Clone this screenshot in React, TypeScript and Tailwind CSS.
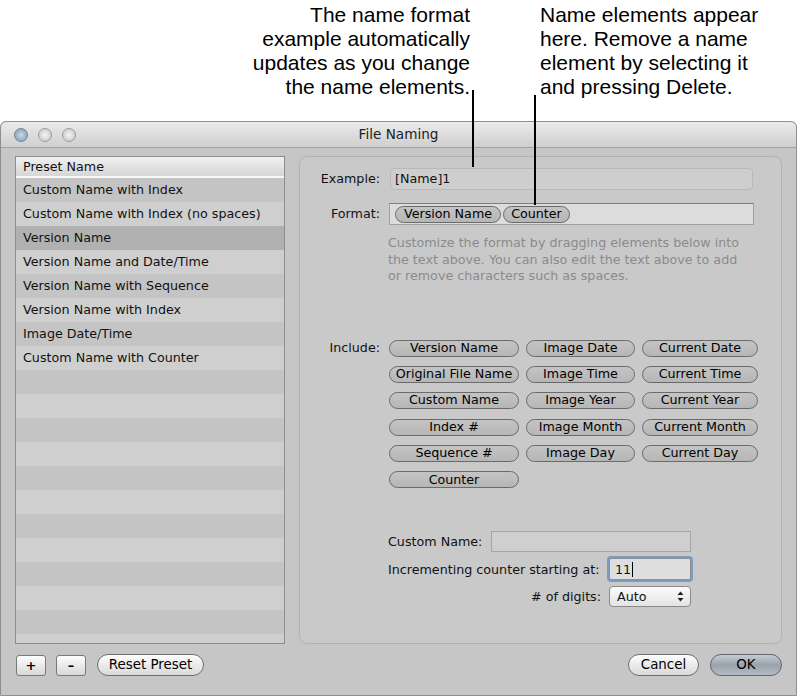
import React from 'react';

const presets = [
  'Custom Name with Index',
  'Custom Name with Index (no spaces)',
  'Version Name',
  'Version Name and Date/Time',
  'Version Name with Sequence',
  'Version Name with Index',
  'Image Date/Time',
  'Custom Name with Counter',
];

const includeCols = [
  ['Version Name', 'Original File Name', 'Custom Name', 'Index #', 'Sequence #', 'Counter'],
  ['Image Date', 'Image Time', 'Image Year', 'Image Month', 'Image Day'],
  ['Current Date', 'Current Time', 'Current Year', 'Current Month', 'Current Day'],
];

const colWidths = ['w-[130px]', 'w-[109px]', 'w-[116px]'];

function Pill({ label, className }: { label: string; className?: string }) {
  return (
    <div
      className={`h-[17px] flex items-center justify-center rounded-full border border-[#6a6a6a] bg-linear-to-b from-[#c4c4c4] to-[#b6b6b6] text-[12.7px] leading-none text-black whitespace-nowrap ${className ?? ''}`}
    >
      {label}
    </div>
  );
}

function TrafficLight({ active }: { active?: boolean }) {
  return (
    <div
      className={`w-[14px] h-[14px] rounded-full border ${
        active
          ? 'border-[#6f8498] bg-radial from-[#c9d8e6] to-[#7f98b0]'
          : 'border-[#9a9a9a] bg-radial from-[#f4f4f4] to-[#c2c2c2]'
      }`}
    />
  );
}

export default function App() {
  return (
    <div className="relative w-[798px] h-[698px] bg-white overflow-hidden font-['DejaVu_Sans',sans-serif]">
      {/* Callout text */}
      <div className="h-[121px] flex font-['Liberation_Sans',Arial,sans-serif] text-[21px] leading-[24px] text-black pt-[3px]">
        <div className="w-[470px] text-right">
          The name format
          <br />
          example automatically
          <br />
          updates as you change
          <br />
          the name elements.
        </div>
        <div className="ml-[70px]">
          Name elements appear
          <br />
          here. Remove a name
          <br />
          element by selecting it
          <br />
          and pressing Delete.
        </div>
      </div>

      {/* Leader lines */}
      <div className="absolute left-[472px] top-[90px] w-[2px] h-[77px] bg-black z-10" />
      <div className="absolute left-[534px] top-[95px] w-[2px] h-[110px] bg-black z-10" />

      {/* Window */}
      <div className="w-[797px] h-[575px] rounded-t-[6px] border border-[#8e8e8e] bg-[#c6c6c6] flex flex-col">
        {/* Title bar */}
        <div className="h-[26px] shrink-0 rounded-t-[6px] bg-linear-to-b from-[#ebebeb] to-[#cfcfcf] border-b border-[#a3a3a3] flex items-center relative">
          <div className="flex gap-[10px] pl-[13px]">
            <TrafficLight active />
            <TrafficLight />
            <TrafficLight />
          </div>
          <div className="absolute inset-0 flex items-center justify-center text-[13.6px] text-[#222]">File Naming</div>
        </div>

        {/* Body */}
        <div className="flex gap-[14px] pl-[14px] pt-[8px] text-[12.7px]">
          {/* Preset list */}
          <div className="w-[270px] h-[488px] border border-[#8c8c8c] bg-[#cfcfcf] flex flex-col overflow-hidden">
            <div className="h-[21px] shrink-0 bg-linear-to-b from-[#f1f1f1] to-[#d6d6d6] border-b-2 border-[#f7f7f7] flex items-center pl-[7px] text-[#111]">
              Preset Name
            </div>
            {Array.from({ length: 20 }).map((_, i) => {
              const selected = i === 2;
              const bg = selected ? 'bg-[#b1b1b1]' : i % 2 === 0 ? 'bg-[#c4c4c4]' : 'bg-[#cfcfcf]';
              return (
                <div key={i} className={`h-[24px] shrink-0 flex items-center pl-[7px] pb-[1px] text-[#111] ${bg}`}>
                  {presets[i] ?? ''}
                </div>
              );
            })}
          </div>

          {/* Settings panel */}
          <div className="w-[483px] h-[488px] rounded-[8px] border border-[#b2b2b2] bg-[#c9c9c9] flex flex-col text-[#111]">
            <div className="flex items-center mt-[11px]">
              <div className="w-[80px] text-right">Example:</div>
              <div className="ml-[10px] w-[363px] h-[22px] rounded-[4px] border border-[#b9b9b9] bg-[#cecece] flex items-center pl-[4px]">
                [Name]1
              </div>
            </div>

            <div className="flex items-center mt-[13px]">
              <div className="w-[80px] text-right">Format:</div>
              <div className="ml-[9px] w-[365px] h-[22px] border border-[#a0a0a0] border-t-[#7d7d7d] bg-[#dcdcdc] flex items-center gap-[2px] pl-[5px]">
                <Pill label="Version Name" className="w-[106px] bg-linear-to-b from-[#bbbbbb] to-[#acacac]" />
                <Pill label="Counter" className="w-[67px] bg-linear-to-b from-[#bbbbbb] to-[#acacac]" />
              </div>
            </div>

            <p className="ml-[88px] mt-[10px] w-[360px] text-[#8b8b8b] leading-[16.5px]">
              Customize the format by dragging elements below into the text above. You can also edit the text above to add
              or remove characters such as spaces.
            </p>

            <div className="flex mt-[55px]">
              <div className="w-[80px] h-[17px] flex items-center justify-end">Include:</div>
              <div className="ml-[9px] flex gap-[7px]">
                {includeCols.map((col, ci) => (
                  <div key={ci} className="flex flex-col gap-[9.4px]">
                    {col.map((label) => (
                      <Pill key={label} label={label} className={colWidths[ci]} />
                    ))}
                  </div>
                ))}
              </div>
            </div>

            <div className="ml-[88px] mt-[43px] w-[303px] flex flex-col">
              <div className="flex items-center justify-between">
                <span>Custom Name:</span>
                <div className="w-[200px] h-[21px] border border-[#a6a6a6] bg-[#cfcfcf]" />
              </div>
              <div className="flex items-center justify-between mt-[6px]">
                <span>Incrementing counter starting at:</span>
                <div className="w-[82px] h-[22px] border border-[#8e8e8e] bg-[#dedede] rounded-[2px] shadow-[0_0_0_2px_#7e9cc2] flex items-center pl-[5px]">
                  11<span className="inline-block w-[1px] h-[15px] bg-black ml-[1px]" />
                </div>
              </div>
              <div className="flex items-center justify-end gap-[8px] mt-[6px]">
                <span># of digits:</span>
                <div className="w-[82px] h-[21px] rounded-[4px] border border-[#8a8a8a] bg-linear-to-b from-[#fbfbfb] to-[#e3e3e3] flex items-center justify-between pl-[7px] pr-[6px]">
                  <span>Auto</span>
                  <svg width="7" height="11" viewBox="0 0 7 11">
                    <path d="M3.5 0.5 L6.5 4 L0.5 4 Z" fill="#222" />
                    <path d="M3.5 10.5 L6.5 7 L0.5 7 Z" fill="#222" />
                  </svg>
                </div>
              </div>
            </div>
          </div>
        </div>

        {/* Bottom buttons */}
        <div className="flex items-center justify-between pl-[15px] pr-[14px] mt-[10px]">
          <div className="flex items-center gap-[10px]">
            <div className="w-[30px] h-[21px] rounded-[3px] border border-[#7a7a7a] bg-linear-to-b from-[#fdfdfd] to-[#d8d8d8] flex items-center justify-center text-[13px] font-bold leading-none">
              +
            </div>
            <div className="w-[30px] h-[21px] rounded-[3px] border border-[#7a7a7a] bg-linear-to-b from-[#fdfdfd] to-[#d8d8d8] flex items-center justify-center text-[13px] font-bold leading-none">
              –
            </div>
            <div className="ml-[1px] w-[107px] h-[22px] rounded-full border border-[#6f6f6f] bg-linear-to-b from-[#fdfdfd] to-[#d9d9d9] flex items-center justify-center text-[13.4px]">
              Reset Preset
            </div>
          </div>
          <div className="flex items-center gap-[11px]">
            <div className="w-[71px] h-[22px] rounded-full border border-[#6f6f6f] bg-linear-to-b from-[#fdfdfd] to-[#d9d9d9] flex items-center justify-center text-[13.4px]">
              Cancel
            </div>
            <div className="w-[72px] h-[22px] rounded-full border border-[#5e6670] bg-linear-to-b from-[#c5ccd3] via-[#9aa3ad] to-[#b3bbc3] flex items-center justify-center text-[13.4px]">
              OK
            </div>
          </div>
        </div>
      </div>
    </div>
  );
}
